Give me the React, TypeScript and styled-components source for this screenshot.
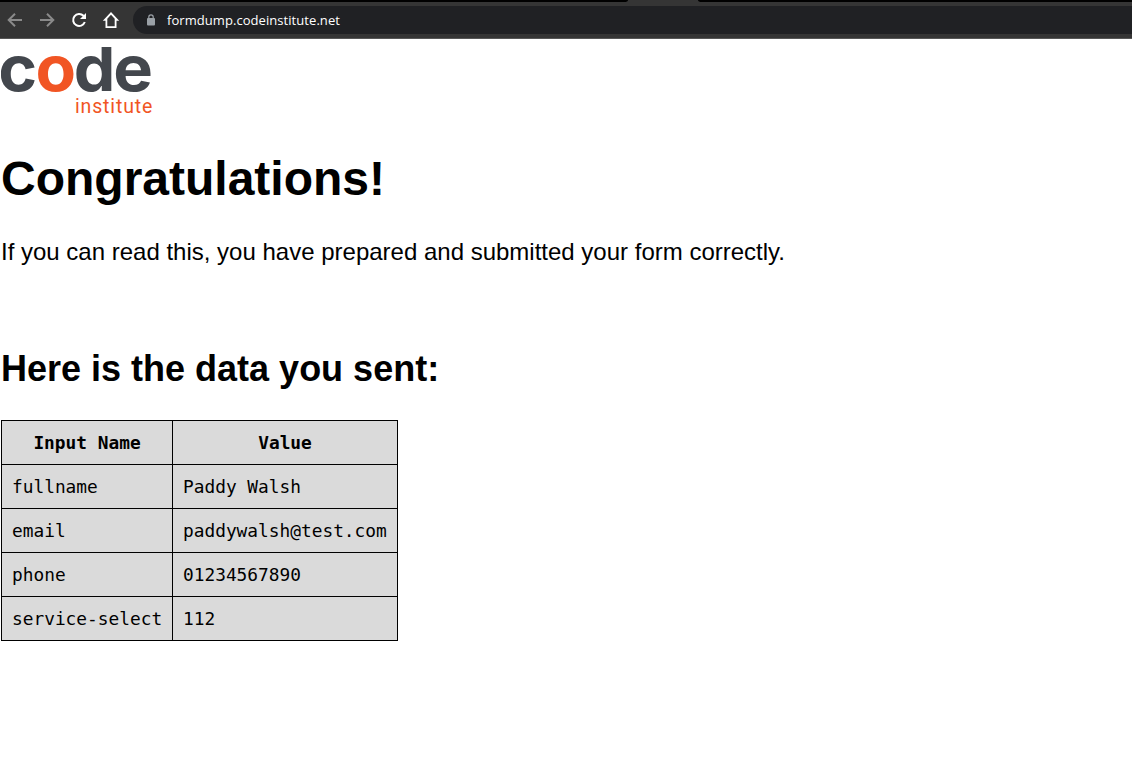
import React from "react";
import styled, { createGlobalStyle } from "styled-components";

const GlobalStyle = createGlobalStyle`
  body {
    margin: 0;
    background: #fff;
    color: #000;
    font-family: "Liberation Sans", Arial, sans-serif;
  }
`;

const Browser = styled.header`
  height: 38px;
  background: #353535;
  border-bottom: 1px solid #575757;
`;

const TabStrip = styled.div`
  display: flex;
  height: 2px;
`;

const StripLeft = styled.div`
  width: 628px;
  background: #000;
  border-bottom-right-radius: 4px 2px;
`;

const StripRight = styled.div`
  flex: 1;
  margin-left: 70px;
  background: #000;
  border-bottom-left-radius: 4px 2px;
`;

const Toolbar = styled.div`
  display: flex;
  align-items: center;
  height: 28px;
  padding-top: 4px;
`;

const NavButtons = styled.nav`
  display: flex;
  gap: 12px;
  width: 128px;
  padding-left: 5px;
  box-sizing: border-box;
  svg {
    display: block;
    flex: none;
  }
`;

const NavIcon = styled.svg<{ $dim?: boolean }>`
  width: 20px;
  height: 20px;
  fill: none;
  stroke: ${(p) => (p.$dim ? "#8a8a8a" : "#fff")};
  stroke-width: 2;
`;

const AddressBar = styled.div`
  flex: 1;
  display: flex;
  align-items: center;
  height: 28px;
  margin-left: 5px;
  padding-left: 13px;
  background: #202124;
  border-radius: 14px 0 0 14px;
`;

const Lock = styled.svg`
  width: 10px;
  height: 12px;
  margin-right: 11px;
`;

const Address = styled.span`
  color: #fff;
  font: 13px/28px "Open Sans", "Noto Sans", sans-serif;
  letter-spacing: 0.06px;
`;

const Content = styled.main`
  padding: 8px 0 0 1px;
`;

const Logo = styled.svg`
  display: block;
  width: 152px;
  height: 72px;
`;

const Title = styled.h1`
  margin: 32px 0 0;
  font-size: 48px;
  line-height: 56px;
`;

const Lead = styled.p`
  margin: 31px 0 0;
  font-size: 24px;
  line-height: 28px;
`;

const Subtitle = styled.h2`
  margin: 82px 0 0;
  font-size: 36px;
  line-height: 42px;
`;

const DataTable = styled.table`
  margin-top: 30px;
  width: 397px;
  table-layout: fixed;
  border-collapse: collapse;
  background: #dadada;
  font: 17.82px/23px "DejaVu Sans Mono", monospace;
`;

const NameColumn = styled.col`
  width: 171px;
`;

const HeadCell = styled.th`
  height: 43px;
  padding: 0 10px;
  border: 1px solid #000;
  text-align: center;
`;

const Cell = styled.td`
  height: 43px;
  padding: 0 10px;
  border: 1px solid #000;
  white-space: nowrap;
`;

const rows = [
  ["fullname", "Paddy Walsh"],
  ["email", "paddywalsh@test.com"],
  ["phone", "01234567890"],
  ["service-select", "112"],
];

export default function App() {
  return (
    <>
      <GlobalStyle />
      <Browser>
        <TabStrip>
          <StripLeft />
          <StripRight />
        </TabStrip>
        <Toolbar>
          <NavButtons>
            <NavIcon $dim viewBox="0 0 20 20">
              <path d="M17 10H4.5M10 3.7 3.7 10l6.3 6.3" />
            </NavIcon>
            <NavIcon $dim viewBox="0 0 20 20">
              <path d="M3 10h12.5M10 3.7l6.3 6.3-6.3 6.3" />
            </NavIcon>
            <NavIcon viewBox="0 0 20 20">
              <path d="M15.8 12a6 6 0 1 1-1.3-6.2L16 7.3" />
              <path d="M17 3v6h-6z" fill="#fff" stroke="none" />
            </NavIcon>
            <NavIcon viewBox="0 0 20 20">
              <path
                d="M10 2 1.8 10.8H4.5V18h11v-7.2h2.7zM10 4.8l3.7 4V16.2H6.3V8.8z"
                fill="#fff"
                fillRule="evenodd"
                stroke="none"
              />
            </NavIcon>
          </NavButtons>
          <AddressBar>
            <Lock viewBox="0 0 10 12">
              <rect x="1" y="4" width="8" height="7.5" rx="1" fill="#9aa0a6" />
              <path d="M2.8 4.5V3a2.2 2.2 0 0 1 4.4 0v1.5" fill="none" stroke="#9aa0a6" strokeWidth="1.2" />
            </Lock>
            <Address>formdump.codeinstitute.net</Address>
          </AddressBar>
        </Toolbar>
      </Browser>
      <Content>
        <Logo viewBox="0 0 152 72">
          <g fontFamily="Inter, sans-serif" fontWeight="700" fontSize="63" fill="#43474d">
            <text transform="translate(-2.8 44.4) scale(1.05 1)">c</text>
            <text transform="translate(34.6 44.4) scale(1.05 1)" fill="#f15524">o</text>
            <text transform="translate(72.8 44.4) scale(1.05 1)">d</text>
            <text transform="translate(112.2 44.4) scale(1.06 1)">e</text>
          </g>
          <text
            x="74"
            y="66"
            fontFamily="Roboto, sans-serif"
            fontSize="19.5"
            fill="#f15524"
            textLength="77.3"
          >
            institute
          </text>
        </Logo>
        <Title>Congratulations!</Title>
        <Lead>If you can read this, you have prepared and submitted your form correctly.</Lead>
        <Subtitle>Here is the data you sent:</Subtitle>
        <DataTable>
          <colgroup>
            <NameColumn />
            <col />
          </colgroup>
          <thead>
            <tr>
              <HeadCell>Input Name</HeadCell>
              <HeadCell>Value</HeadCell>
            </tr>
          </thead>
          <tbody>
            {rows.map(([name, value]) => (
              <tr key={name}>
                <Cell>{name}</Cell>
                <Cell>{value}</Cell>
              </tr>
            ))}
          </tbody>
        </DataTable>
      </Content>
    </>
  );
}
